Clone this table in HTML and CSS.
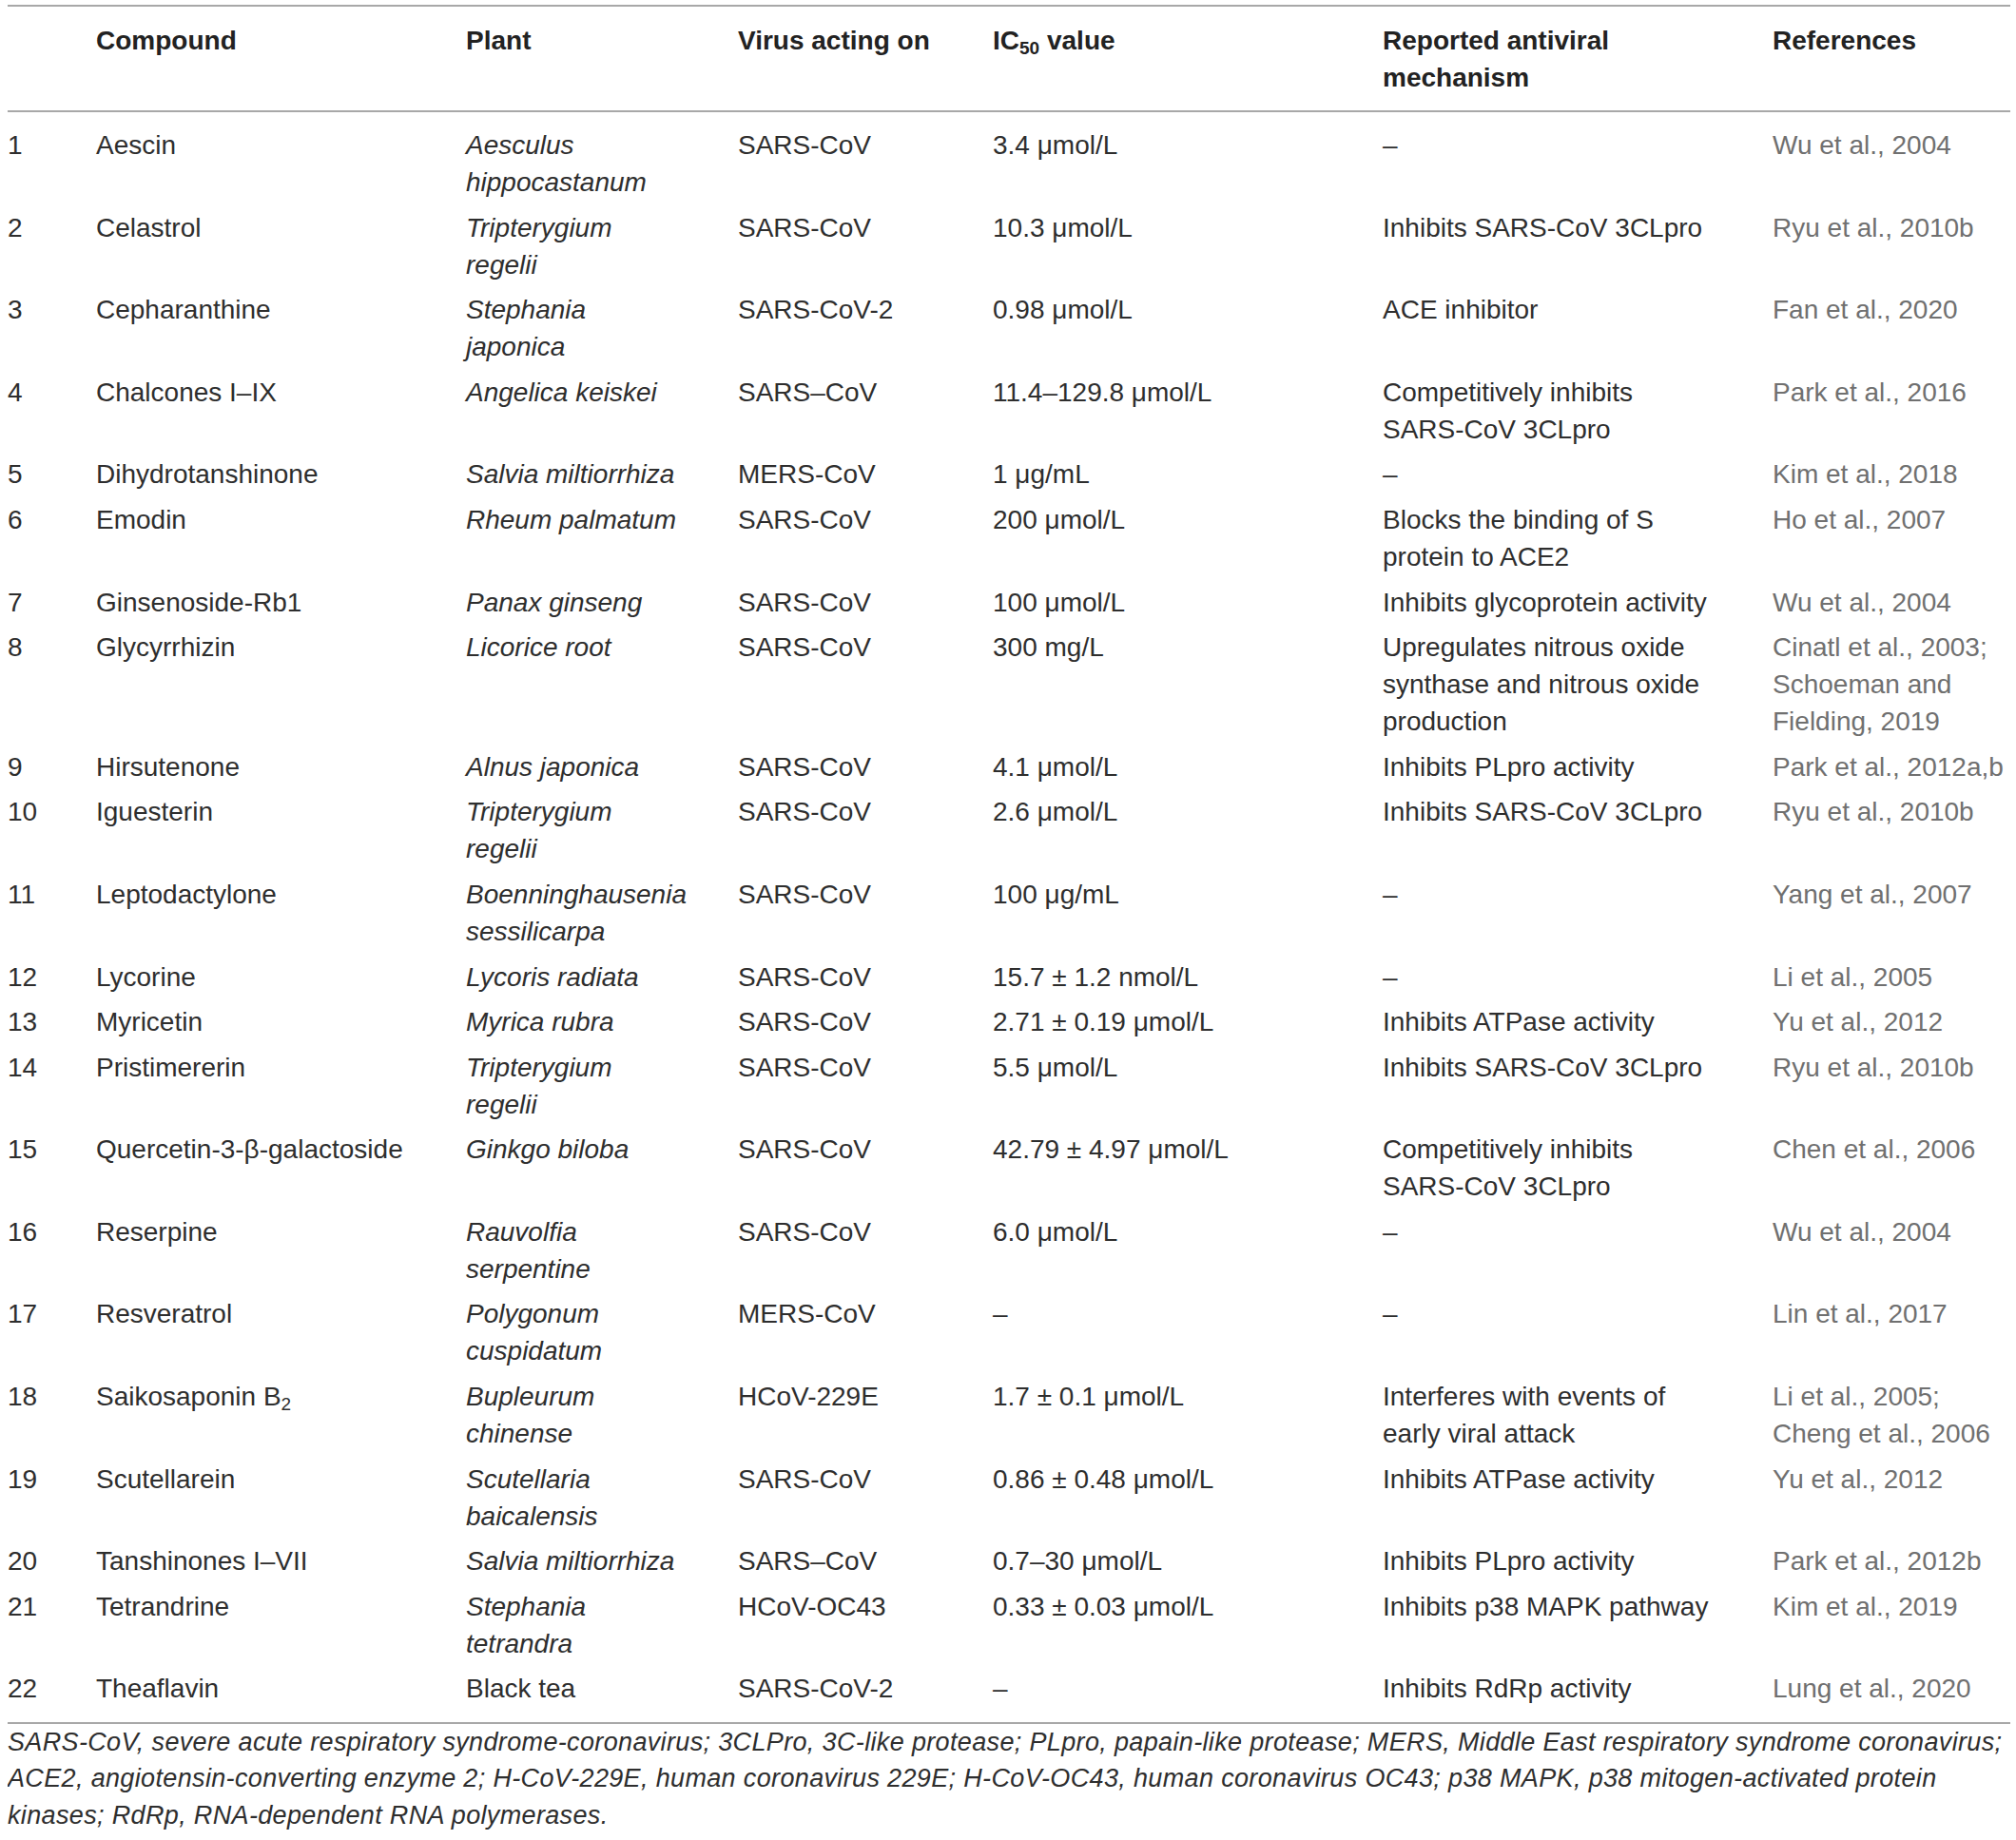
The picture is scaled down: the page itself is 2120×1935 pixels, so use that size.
FILE: index.html
```html
<!DOCTYPE html>
<html lang="en">
<head>
<meta charset="utf-8">
<title>Table</title>
<link rel="stylesheet" href="styles.css">
</head>
<body>
<table class="tbl">
  <colgroup>
    <col class="c-num"><col class="c-cmp"><col class="c-plant"><col class="c-virus"><col class="c-ic"><col class="c-mech"><col class="c-ref">
  </colgroup>
  <thead>
    <tr>
      <th></th>
      <th>Compound</th>
      <th>Plant</th>
      <th>Virus acting on</th>
      <th>IC<sub>50</sub> value</th>
      <th>Reported antiviral<br>mechanism</th>
      <th>References</th>
    </tr>
  </thead>
  <tbody>
    <tr><td>1</td><td>Aescin</td><td class="it">Aesculus<br>hippocastanum</td><td>SARS-CoV</td><td>3.4 μmol/L</td><td>–</td><td class="ref">Wu et al., 2004</td></tr>
    <tr><td>2</td><td>Celastrol</td><td class="it">Tripterygium<br>regelii</td><td>SARS-CoV</td><td>10.3 μmol/L</td><td>Inhibits SARS-CoV 3CLpro</td><td class="ref">Ryu et al., 2010b</td></tr>
    <tr><td>3</td><td>Cepharanthine</td><td class="it">Stephania<br>japonica</td><td>SARS-CoV-2</td><td>0.98 μmol/L</td><td>ACE inhibitor</td><td class="ref">Fan et al., 2020</td></tr>
    <tr><td>4</td><td>Chalcones I–IX</td><td class="it">Angelica keiskei</td><td>SARS–CoV</td><td>11.4–129.8 μmol/L</td><td>Competitively inhibits<br>SARS-CoV 3CLpro</td><td class="ref">Park et al., 2016</td></tr>
    <tr><td>5</td><td>Dihydrotanshinone</td><td class="it">Salvia miltiorrhiza</td><td>MERS-CoV</td><td>1 μg/mL</td><td>–</td><td class="ref">Kim et al., 2018</td></tr>
    <tr><td>6</td><td>Emodin</td><td class="it">Rheum palmatum</td><td>SARS-CoV</td><td>200 μmol/L</td><td>Blocks the binding of S<br>protein to ACE2</td><td class="ref">Ho et al., 2007</td></tr>
    <tr><td>7</td><td>Ginsenoside-Rb1</td><td class="it">Panax ginseng</td><td>SARS-CoV</td><td>100 μmol/L</td><td>Inhibits glycoprotein activity</td><td class="ref">Wu et al., 2004</td></tr>
    <tr><td>8</td><td>Glycyrrhizin</td><td class="it">Licorice root</td><td>SARS-CoV</td><td>300 mg/L</td><td>Upregulates nitrous oxide<br>synthase and nitrous oxide<br>production</td><td class="ref">Cinatl et al., 2003;<br>Schoeman and<br>Fielding, 2019</td></tr>
    <tr><td>9</td><td>Hirsutenone</td><td class="it">Alnus japonica</td><td>SARS-CoV</td><td>4.1 μmol/L</td><td>Inhibits PLpro activity</td><td class="ref">Park et al., 2012a,b</td></tr>
    <tr><td>10</td><td>Iguesterin</td><td class="it">Tripterygium<br>regelii</td><td>SARS-CoV</td><td>2.6 μmol/L</td><td>Inhibits SARS-CoV 3CLpro</td><td class="ref">Ryu et al., 2010b</td></tr>
    <tr><td>11</td><td>Leptodactylone</td><td class="it">Boenninghausenia<br>sessilicarpa</td><td>SARS-CoV</td><td>100 μg/mL</td><td>–</td><td class="ref">Yang et al., 2007</td></tr>
    <tr><td>12</td><td>Lycorine</td><td class="it">Lycoris radiata</td><td>SARS-CoV</td><td>15.7 ± 1.2 nmol/L</td><td>–</td><td class="ref">Li et al., 2005</td></tr>
    <tr><td>13</td><td>Myricetin</td><td class="it">Myrica rubra</td><td>SARS-CoV</td><td>2.71 ± 0.19 μmol/L</td><td>Inhibits ATPase activity</td><td class="ref">Yu et al., 2012</td></tr>
    <tr><td>14</td><td>Pristimererin</td><td class="it">Tripterygium<br>regelii</td><td>SARS-CoV</td><td>5.5 μmol/L</td><td>Inhibits SARS-CoV 3CLpro</td><td class="ref">Ryu et al., 2010b</td></tr>
    <tr><td>15</td><td>Quercetin-3-β-galactoside</td><td class="it">Ginkgo biloba</td><td>SARS-CoV</td><td>42.79 ± 4.97 μmol/L</td><td>Competitively inhibits<br>SARS-CoV 3CLpro</td><td class="ref">Chen et al., 2006</td></tr>
    <tr><td>16</td><td>Reserpine</td><td class="it">Rauvolfia<br>serpentine</td><td>SARS-CoV</td><td>6.0 μmol/L</td><td>–</td><td class="ref">Wu et al., 2004</td></tr>
    <tr><td>17</td><td>Resveratrol</td><td class="it">Polygonum<br>cuspidatum</td><td>MERS-CoV</td><td>–</td><td>–</td><td class="ref">Lin et al., 2017</td></tr>
    <tr><td>18</td><td>Saikosaponin B<sub>2</sub></td><td class="it">Bupleurum<br>chinense</td><td>HCoV-229E</td><td>1.7 ± 0.1 μmol/L</td><td>Interferes with events of<br>early viral attack</td><td class="ref">Li et al., 2005;<br>Cheng et al., 2006</td></tr>
    <tr><td>19</td><td>Scutellarein</td><td class="it">Scutellaria<br>baicalensis</td><td>SARS-CoV</td><td>0.86 ± 0.48 μmol/L</td><td>Inhibits ATPase activity</td><td class="ref">Yu et al., 2012</td></tr>
    <tr><td>20</td><td>Tanshinones I–VII</td><td class="it">Salvia miltiorrhiza</td><td>SARS–CoV</td><td>0.7–30 μmol/L</td><td>Inhibits PLpro activity</td><td class="ref">Park et al., 2012b</td></tr>
    <tr><td>21</td><td>Tetrandrine</td><td class="it">Stephania<br>tetrandra</td><td>HCoV-OC43</td><td>0.33 ± 0.03 μmol/L</td><td>Inhibits p38 MAPK pathway</td><td class="ref">Kim et al., 2019</td></tr>
    <tr><td>22</td><td>Theaflavin</td><td>Black tea</td><td>SARS-CoV-2</td><td>–</td><td>Inhibits RdRp activity</td><td class="ref">Lung et al., 2020</td></tr>
  </tbody>
</table>
<div class="foot">SARS-CoV, severe acute respiratory syndrome-coronavirus; 3CLPro, 3C-like protease; PLpro, papain-like protease; MERS, Middle East respiratory syndrome coronavirus;<br>ACE2, angiotensin-converting enzyme 2; H-CoV-229E, human coronavirus 229E; H-CoV-OC43, human coronavirus OC43; p38 MAPK, p38 mitogen-activated protein<br>kinases; RdRp, RNA-dependent RNA polymerases.</div>
</body>
</html>
```
FILE: styles.css
```css
html, body {
  background: #ffffff;
}
body {
  margin: 5px 6px 0 8px;
  font-family: "Liberation Sans", Arial, sans-serif;
  color: #2e2e2e;
}
.tbl {
  width: 2106px;
  table-layout: fixed;
  border-collapse: separate;
  border-spacing: 0;
  border-top: 2px solid #a8a8a8;
  font-size: 28px;
  line-height: 39px;
}
.c-num { width: 93px; }
.c-cmp { width: 389px; }
.c-plant { width: 286px; }
.c-virus { width: 268px; }
.c-ic { width: 410px; }
.c-mech { width: 410px; }
.c-ref { width: 250px; }

.tbl th,
.tbl td {
  text-align: left;
  vertical-align: top;
  white-space: nowrap;
  padding: 4.3px 0;
}
.tbl th {
  font-weight: bold;
  color: #222;
  padding-top: 15.8px;
  padding-bottom: 15.2px;
  border-bottom: 2px solid #a8a8a8;
}
.tbl tbody tr:first-child td {
  padding-top: 15px;
}
.tbl tbody tr:last-child td {
  padding-bottom: 15.5px;
  border-bottom: 2px solid #a8a8a8;
}
.tbl .it {
  font-style: italic;
}
.tbl .ref {
  color: #707070;
}
sub {
  font-size: 0.68em;
  line-height: 0;
  vertical-align: -0.28em;
}
.foot {
  font-size: 27px;
  letter-spacing: 0.35px;
  line-height: 38.5px;
  font-style: italic;
  color: #2e2e2e;
  white-space: nowrap;
}
```
